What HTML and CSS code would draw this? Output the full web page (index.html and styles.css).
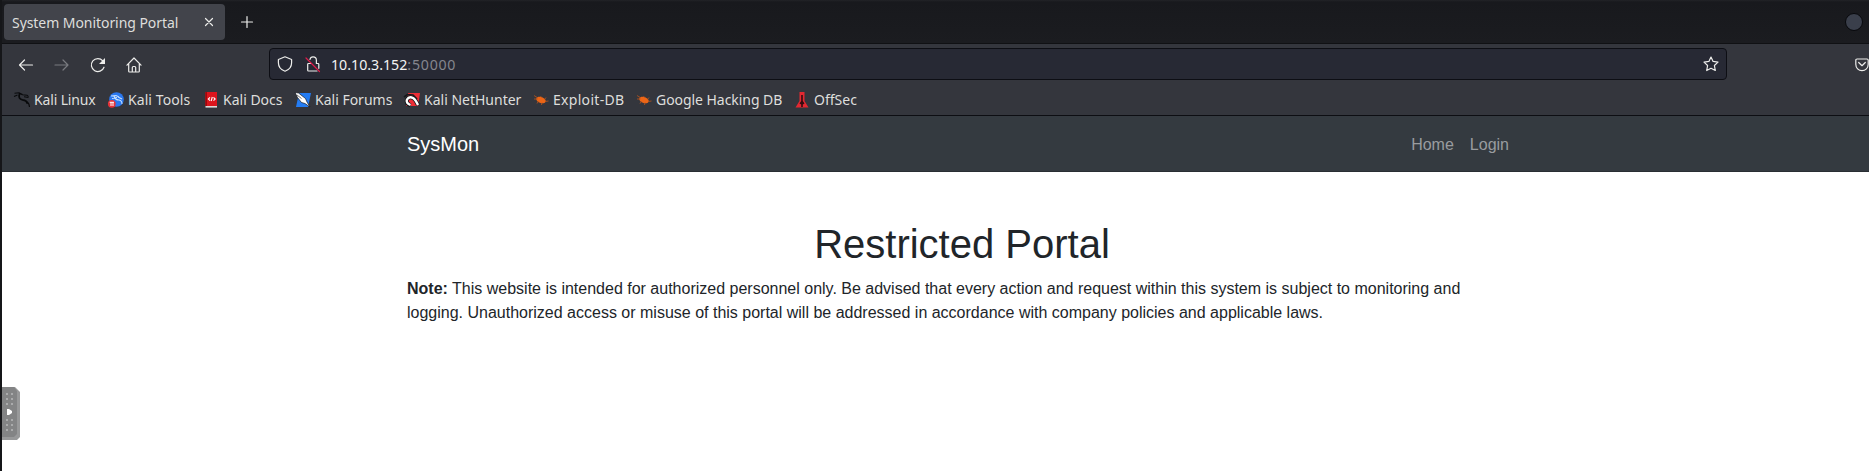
FILE: index.html
```html
<!DOCTYPE html>
<html lang="en">
<head>
<meta charset="utf-8">
<title>System Monitoring Portal</title>
<link rel="stylesheet" href="styles.css">
</head>
<body>
<div class="browser">
  <div class="tabbar">
    <div class="tab"><span class="tab-title">System Monitoring Portal</span>
      <svg class="close" viewBox="0 0 10 10"><path d="M1.500 1.500l7 7M8.500 1.500l-7 7"/></svg>
    </div>
    <svg class="plus" viewBox="0 0 14 14"><path d="M7 1.500v11M1.500 7h11"/></svg>
    <span class="window-dot"></span>
  </div>
  <div class="toolbar">
    <div class="controls">
      <svg viewBox="0 0 16 16"><path d="M14.500 8H1.500M6.500 3l-5 5 5 5"/></svg>
      <svg class="dim" viewBox="0 0 16 16"><path d="M1 8h13M9 3l5 5-5 5"/></svg>
      <svg viewBox="0 0 16 16"><path d="M14 10.200A6.500 6.500 0 1 1 12.800 3.800"/><path class="solid" d="M15 1v6H9z"/></svg>
      <svg viewBox="0 0 16 16"><path d="M1 8.200L8 1l7 7.200M2.700 7v7.200q0 .8.800.8h9q.8 0 .8-.8V7M6.300 15v-4.500q0-1 1-1h1.400q1 0 1 1V15"/></svg>
    </div>
    <div class="address">
      <svg class="shield" viewBox="0 0 16 16"><path d="M8 .8l6.600 2.700v3.200c0 4-2.400 7-6.600 8.500C3.800 13.700 1.400 10.700 1.400 6.700V3.500z"/></svg>
      <svg class="lock" viewBox="0 0 16 16"><path d="M5 3.500C5.300 1.700 6.300.9 8 .9s3.400 1.200 3.400 3.400V7.500H13q.8 0 .8.800v4M6.500 7.500h-3q-.8 0-.8.800v5.900q0 .8.800.800h8.500"/><path class="slash" d="M1 2l13.500 13.500"/></svg>
      <span class="url">10.10.3.152<span class="port">:50000</span></span>
      <svg class="star" viewBox="0 0 16 16"><path d="M8 1l2.100 4.400 4.900.7-3.600 3.400.9 5L8 12.300l-4.300 2.200.9-5L1 6.100l4.900-.7z"/></svg>
    </div>
    <svg class="pocket" viewBox="0 0 14 14"><path d="M2 1h10q1.200 0 1.200 1.200v4C13.200 10 10.500 12.700 7 12.700S.8 10 .8 6.200v-4Q.8 1 2 1zM3.700 4.500L7 7.700l3.300-3.200"/></svg>
  </div>
  <div class="bookmarks">
    <div class="bookmark linux"><svg viewBox="0 0 16 16"><g class="dragon"><path d="M.5 1.200L5 .8l3.500 1.700M0 4.500l3.500-1.500M5 1.500l3.500 1.300 4.500.4 1.500 1.500"/><path class="body" d="M5.500 2C4.300 5 5.500 7.200 8.500 7.800c3.500.5 4.700 1.500 4.700 4"/><path d="M12.500 9.500q2.800 1.500 3 5.500M10 4.800l4.500.7"/></g></svg>Kali Linux</div>
    <div class="bookmark tools"><svg viewBox="0 0 16 16"><circle cx="8.500" cy="7.500" r="7.300" fill="#2a78f0"/><path d="M3 4l5-.5 3 1.500M4 6.500l5-1M6 4q1 4 5 4 3 .5 3 4M10 5l4 2" fill="none" stroke="#c6e0ff" stroke-width="1.100"/><circle cx="3.800" cy="11.800" r="3.900" fill="#e63238"/><path d="M1.700 10.300h4.200M3 10v4M5 10v4" stroke="#fff" stroke-width="1"/></svg>Kali Tools</div>
    <div class="bookmark"><svg viewBox="0 0 16 16"><path d="M2.500 0H14v14H2.500z" fill="#dc151d"/><path d="M2.500 0H4v14H2.500z" fill="#a3060b"/><path d="M2.500 14H14v1.600H2.500z" fill="#ded8d8"/><path d="M7 5.300L5.300 7 7 8.700M10.500 5.300L12.200 7l-1.700 1.700M9.300 5L8.200 9" fill="none" stroke="#fff" stroke-width="1.100"/></svg>Kali Docs</div>
    <div class="bookmark"><svg viewBox="0 0 16 16"><path d="M4 1h12l-3 14H1z" fill="#247cf3"/><path d="M0 .5l3.500.5 7 5.500 1.500 3.500 3 5-5-3.500-3.500-1-4-5z" fill="#fff" stroke="#15191f" stroke-width=".7"/><path d="M2 3l4.500 3.500" stroke="#333" stroke-width=".7"/></svg>Kali Forums</div>
    <div class="bookmark"><svg viewBox="0 0 16 16"><path d="M4 1h12l-2 13H2z" fill="#ee2d36"/><path d="M0 5l3.500-2.500L9 3l4 4" fill="none" stroke="#17191c" stroke-width="1.600"/><path d="M6.500 13.500Q1.500 11 3 7.500q2-3.500 6-1.500 2.500 1.500 5 7" fill="none" stroke="#15171a" stroke-width="4"/><path d="M6.500 13Q1.500 11 3 7.500q2-3.500 6-1.500 2.500 1.500 5 7" fill="none" stroke="#fff" stroke-width="2.400"/></svg>Kali NetHunter</div>
    <div class="bookmark exploit"><svg viewBox="0 0 16 16"><g id="bug"><ellipse cx="8" cy="8" rx="5" ry="3" transform="rotate(22 8 8)" fill="#ec6516"/><path d="M1 3.500l4 2.500M1 7l3.500 0M4 11.500L5.500 9M8.500 13l.5-2.500M8.500 5.500l-1-1.500M11.500 7.500l1.500-2M12 9.500l3.500-.5" stroke="#b9541c" stroke-width=".8"/></g></svg>Exploit-DB</div>
    <div class="bookmark google"><svg viewBox="0 0 16 16"><use href="#bug"/></svg>Google Hacking DB</div>
    <div class="bookmark"><svg viewBox="0 0 16 16"><path d="M5.500 0h5v9l4 6.500h-13l4-6.500z" fill="#e32831"/><path d="M7.200 3h1.600v6l1.700 2.500-1.700 1v2.500H7.200v-2.500l-1.700-1L7.200 9z" fill="#350b10"/></svg>OffSec</div>
  </div>
</div>
<nav class="navbar"><div class="container nav-inner"><span class="brand">SysMon</span><div class="links"><span>Home</span><span>Login</span></div></div></nav>
<main class="container">
  <h1>Restricted Portal</h1>
  <p><strong>Note:</strong> This website is intended for authorized personnel only. Be advised that every action and request within this system is subject to monitoring and logging. Unauthorized access or misuse of this portal will be addressed in accordance with company policies and applicable laws.</p>
</main>
<svg class="handle" viewBox="0 0 18 53"><path d="M0 0h13l5 5v45l-3 3H0z" fill="#98999a"/><path d="M0 0h12l3 4v43l-3 3H0z" fill="#838485"/><path d="M4 7h7M4 12h7M4 17h7M4 33h7M4 38h7M4 43h7" stroke="#aaabac" stroke-width="2" stroke-dasharray="2 3"/><path d="M5 22h2l3 2v2l-3 2H5z" fill="#fff"/></svg>
</body>
</html>
```
FILE: styles.css
```css
* { box-sizing: border-box; }
body {
  margin: 0;
  height: 471px;
  overflow: hidden;
  border-left: 2px solid #151619;
  background: #fff;
  color: #212529;
  font: 16px/24px "Liberation Sans", Arial, sans-serif;
}
svg { display: block; flex: none; overflow: visible; }
.browser {
  height: 116px;
  background: #34363d;
  border-bottom: 1px solid #0d0e13;
  color: #dededc;
  font: 14px/20px "Noto Sans", sans-serif;
}
.tabbar {
  display: flex;
  align-items: center;
  height: 44px;
  padding: 1px 6px 0 2px;
  background: linear-gradient(#222327 0, #18191d 2px, #1b1c20 100%);
  border-bottom: 1px solid #101114;
}
.tab {
  display: flex;
  align-items: center;
  justify-content: space-between;
  width: 221px;
  height: 36px;
  padding: 0 11px 0 8px;
  border-radius: 4px;
  background: #42444b;
}
.tab-title { padding-top: 2px; letter-spacing: -0.06px; }
.close { width: 10px; height: 10px; }
.close, .plus, .controls svg, .address svg, .pocket {
  fill: none;
  stroke: #ededeb;
  stroke-width: 1.2;
  stroke-linecap: round;
  stroke-linejoin: round;
}
.plus { width: 14px; height: 14px; margin-left: 15px; }
.window-dot {
  width: 18px;
  height: 18px;
  margin-left: auto;
  border: 1px solid #08090c;
  border-radius: 50%;
  background: #3a3f4b;
}
.toolbar { display: flex; height: 41px; padding: 4px 0 0 16px; }
.controls { display: flex; gap: 20px; width: 251px; padding-top: 9px; }
.controls svg { width: 16px; height: 16px; }
.controls .dim { stroke: #797b80; }
.controls .solid { fill: #ededeb; stroke: none; }
.address {
  display: flex;
  align-items: center;
  width: 1458px;
  height: 32px;
  padding: 0 7px;
  border: 1px solid #0d0e14;
  border-radius: 4px;
  background: #272934;
}
.address svg { width: 16px; height: 16px; }
.address .lock { margin: 0 10px 0 12px; }
.address .slash { stroke: #df1c4b; }
.url { padding-top: 1px; color: #f3f3f2; font-size: 14.2px; }
.port { color: #85868e; letter-spacing: 0.75px; }
.address .star { margin-left: auto; }
.pocket { width: 14px; height: 14px; margin: 10px 0 0 128px; }
.bookmarks {
  display: grid;
  grid-template-columns: 94px 95px 92px 109px 129px 103px 158px auto;
  padding: 5px 0 0 12px;
}
.bookmark { display: flex; align-items: center; gap: 4px; white-space: nowrap; }
.bookmark svg { width: 16px; height: 16px; }
.linux { letter-spacing: -0.15px; }
.tools { letter-spacing: 0.08px; }
.exploit { letter-spacing: 0.3px; }
.google { letter-spacing: -0.05px; }
.dragon { fill: none; stroke: #090a0c; stroke-width: 1.1; }
.dragon .body { stroke-width: 1.8; }
.navbar { height: 56px; background: #343a40; border-bottom: 1px solid #292e33; }
.container { width: 1110px; margin-left: 405px; }
.nav-inner { display: flex; align-items: center; justify-content: space-between; height: 56px; }
.brand { color: #fff; font-size: 20px; }
.links { display: flex; gap: 16px; padding: 2px 8px 0 0; color: #999c9f; }
h1 { margin: 48px 0 9px; font-size: 40px; line-height: 48px; font-weight: 400; text-align: center; }
p { margin: 0; }
.handle { position: absolute; left: 2px; top: 387px; width: 18px; height: 53px; }
```
